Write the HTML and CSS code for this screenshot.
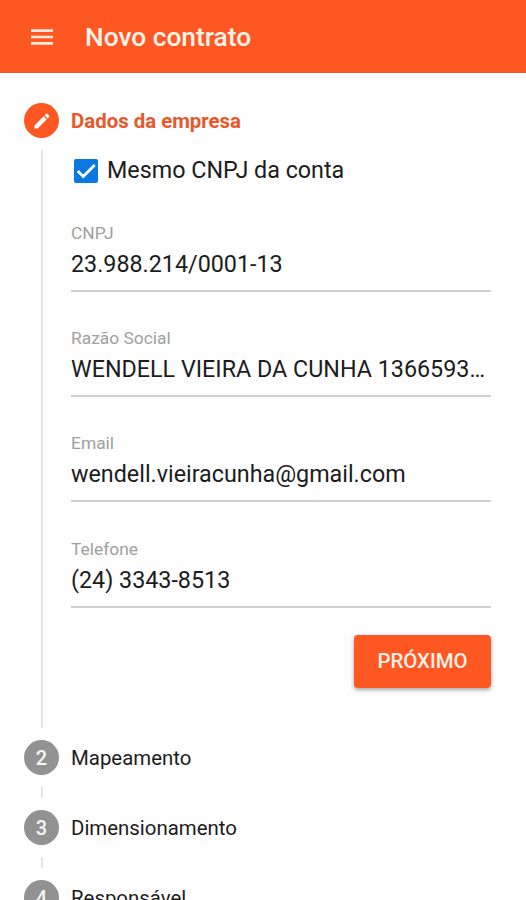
FILE: index.html
```html
<!DOCTYPE html>
<html lang="pt-BR">
    <head>
        <meta charset="utf-8">
        <title>Novo contrato</title>
        <link rel="stylesheet" href="styles.css">
    </head>
    <body>
        <header class="toolbar">
            <svg class="menu-icon" viewBox="0 0 22 16">
                <path d="M0 1.6h22M0 8h22M0 14.4h22"/>
            </svg>
            <h1 class="toolbar-title">Novo contrato</h1>
        </header>

        <main class="stepper">
            <section class="step active">
                <div class="step-header">
                    <span class="step-number">
                        <svg class="edit-icon" viewBox="0 0 24 24">
                            <path d="M3 17.25V21h3.75L17.81 9.94l-3.75-3.75L3 17.25zM20.71 7.04a1 1 0 0 0 0-1.41l-2.34-2.34a1 1 0 0 0-1.41 0l-1.83 1.83 3.75 3.75 1.83-1.83z"/>
                        </svg>
                    </span>
                    <span class="step-title">Dados da empresa</span>
                </div>
                <div class="step-content">
                    <div class="check">
                        <span class="check-box">
                            <svg class="check-icon" viewBox="0 0 24 24">
                                <path d="M3 12l6 6L21.5 5.5"/>
                            </svg>
                        </span>
                        <span class="check-label">Mesmo CNPJ da conta</span>
                    </div>
                    <div class="field">
                        <div class="field-label">CNPJ</div>
                        <div class="field-value">23.988.214/0001-13</div>
                    </div>
                    <div class="field">
                        <div class="field-label">Razão Social</div>
                        <div class="field-value">WENDELL VIEIRA DA CUNHA 1366593…</div>
                    </div>
                    <div class="field">
                        <div class="field-label">Email</div>
                        <div class="field-value">wendell.vieiracunha@gmail.com</div>
                    </div>
                    <div class="field">
                        <div class="field-label">Telefone</div>
                        <div class="field-value">(24) 3343-8513</div>
                    </div>
                    <button class="next">PRÓXIMO</button>
                </div>
            </section>

            <section class="step">
                <div class="step-header">
                    <span class="step-number">2</span>
                    <span class="step-title">Mapeamento</span>
                </div>
                <div class="step-content"></div>
            </section>

            <section class="step">
                <div class="step-header">
                    <span class="step-number">3</span>
                    <span class="step-title">Dimensionamento</span>
                </div>
                <div class="step-content"></div>
            </section>

            <section class="step">
                <div class="step-header">
                    <span class="step-number">4</span>
                    <span class="step-title">Responsável</span>
                </div>
            </section>
        </main>
    </body>
</html>
```
FILE: styles.css
```css
* {
    box-sizing: border-box;
}

body {
    height: 900px;
    margin: 0;
    overflow: hidden;
    background: #fefefe;
    color: #1c1c1c;
    font-family: Roboto, "Liberation Sans", sans-serif;
}

.toolbar {
    display: flex;
    align-items: center;
    height: 73px;
    padding: 2px 0 0 31px;
    background: #ff5722;
    border-bottom: 1px solid #f0562a;
    color: #fff3ea;
}

.menu-icon {
    width: 22px;
    height: 16px;
    fill: none;
    stroke: #ffe9dc;
    stroke-width: 2.6;
}

.toolbar-title {
    margin: 0 0 0 32px;
    font-size: 26.3px;
    font-weight: 500;
    line-height: 30px;
}

.stepper {
    padding: 30px 35px 0 24px;
}

.step-header {
    display: flex;
    align-items: center;
    gap: 12px;
    height: 35px;
}

.step-number {
    display: flex;
    align-items: center;
    justify-content: center;
    width: 35px;
    height: 35px;
    border-radius: 50%;
    background: #929292;
    color: #f5f5f5;
    font-size: 20px;
    font-weight: 500;
    line-height: 24px;
}

.step-title {
    font-size: 20.4px;
    line-height: 26px;
    padding-top: 1px;
}

.active .step-number {
    background: #ff5722;
}

.active .step-title {
    padding-top: 0;
    color: #e8582a;
    font-weight: 700;
}

.edit-icon {
    width: 20px;
    height: 20px;
    fill: #fff;
}

.step-content {
    height: 11px;
    margin: 12px 0 12px 17px;
    padding-left: 28px;
    border-left: 2px solid #e4e4e4;
}

.active .step-content {
    height: 578px;
}

.check {
    display: flex;
    align-items: center;
    height: 42px;
    padding-left: 3px;
}

.check-box {
    display: flex;
    align-items: center;
    justify-content: center;
    width: 24px;
    height: 24px;
    border-radius: 2px;
    background: #0b78e0;
}

.check-icon {
    width: 22px;
    height: 22px;
    fill: none;
    stroke: #fff;
    stroke-width: 3;
}

.check-label {
    margin-left: 9px;
    font-size: 23.3px;
    line-height: 28px;
    padding-bottom: 3px;
}

.field {
    height: 105.2px;
    padding-top: 30px;
}

.field-label {
    color: #a0a0a0;
    font-size: 17.4px;
    line-height: 22px;
}

.field-value {
    height: 48px;
    padding-top: 6px;
    border-bottom: 2px solid #d0d0d0;
    font-size: 23.3px;
    line-height: 28px;
    white-space: nowrap;
}

.next {
    display: block;
    width: 137px;
    height: 53px;
    margin: 22px 0 0 auto;
    padding: 0;
    border: 0;
    border-radius: 4px;
    background: #ff5722;
    box-shadow: 0 2px 4px rgba(0, 0, 0, .35);
    color: #fff0e8;
    font-family: inherit;
    font-size: 20.4px;
    font-weight: 500;
}
```
